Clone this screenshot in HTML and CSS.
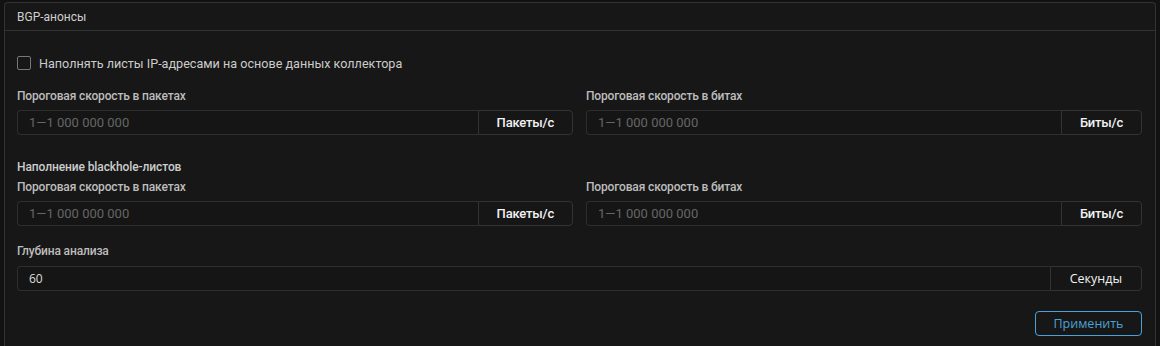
FILE: index.html
```html
<!DOCTYPE html>
<html>
<head>
  <title>BGP-анонсы</title>
  <link rel="stylesheet" href="styles.css">
</head>
<body>
  <div class="card">
    <div class="card-header">BGP-анонсы</div>

    <div class="card-body">
      <label class="check">
        <span class="box"></span>
        Наполнять листы IP-адресами на основе данных коллектора
      </label>

      <div class="row first">
        <div class="field">
          <div class="label">Пороговая скорость в пакетах</div>
          <div class="group">
            <input type="text" class="input" placeholder="1—1 000 000 000">
            <button class="addon">Пакеты/с</button>
          </div>
        </div>
        <div class="field">
          <div class="label">Пороговая скорость в битах</div>
          <div class="group">
            <input type="text" class="input" placeholder="1—1 000 000 000">
            <button class="addon">Биты/с</button>
          </div>
        </div>
      </div>

      <div class="section-title">Наполнение blackhole-листов</div>
      <div class="row">
        <div class="field">
          <div class="label">Пороговая скорость в пакетах</div>
          <div class="group">
            <input type="text" class="input" placeholder="1—1 000 000 000">
            <button class="addon">Пакеты/с</button>
          </div>
        </div>
        <div class="field">
          <div class="label">Пороговая скорость в битах</div>
          <div class="group">
            <input type="text" class="input" placeholder="1—1 000 000 000">
            <button class="addon">Биты/с</button>
          </div>
        </div>
      </div>

      <div class="field depth">
        <div class="label">Глубина анализа</div>
        <div class="group">
          <input type="text" class="input value" value="60">
          <button class="addon alt">Секунды</button>
        </div>
      </div>

      <div class="actions">
        <button class="apply">Применить</button>
      </div>
    </div>
  </div>
</body>
</html>
```

FILE: styles.css
```css
* {
  box-sizing: border-box;
}

body {
  margin: 0;
  background-color: #121212;
  font-family: Roboto, "Liberation Sans", sans-serif;
  color: #cccccc;
  overflow: hidden;
}

.card {
  margin: 2px 4px 0 4px;
  background-color: #171717;
  border: 1px solid #333333;
  border-bottom: none;
  border-radius: 4px 4px 0 0;
  height: 344px;
}

.card-header {
  height: 28px;
  line-height: 28px;
  padding-left: 12px;
  font-size: 12px;
  color: #cfcfcf;
  border-bottom: 1px solid #333333;
}

.card-body {
  padding: 25px 13px 0 12px;
}

.check {
  display: flex;
  align-items: center;
  gap: 8px;
  height: 14px;
  font-size: 12.6px;
  color: #cccccc;
}

.box {
  width: 14px;
  height: 14px;
  border: 1px solid #777777;
  border-radius: 2px;
}

.row {
  display: grid;
  grid-template-columns: 1fr 1fr;
  gap: 13px;
}

.row.first {
  margin-top: 18px;
}

.label {
  font-size: 12px;
  font-weight: 500;
  line-height: 16px;
  color: #bdbdbd;
  letter-spacing: -0.15px;
  margin-bottom: 6px;
}

.group {
  display: flex;
  height: 25px;
}

.input {
  flex: 1;
  min-width: 0;
  height: 100%;
  padding: 0 11px;
  font-family: Roboto, "Liberation Sans", sans-serif;
  font-size: 13px;
  color: #dddddd;
  background-color: #151515;
  border: 1px solid #2e2e2e;
  border-right: none;
  border-radius: 4px 0 0 4px;
  outline: none;
}

.input::placeholder {
  color: #666666;
}

.input.value {
  font-family: "Open Sans", Roboto, sans-serif;
  font-size: 12px;
}

.addon {
  height: 100%;
  padding: 0 18px;
  font-family: Roboto, "Liberation Sans", sans-serif;
  font-size: 13px;
  font-weight: 500;
  letter-spacing: -0.2px;
  color: #f2f2f2;
  background-color: #161616;
  border: 1px solid #333333;
  border-radius: 0 4px 4px 0;
}

.addon.alt {
  font-family: "Open Sans", Roboto, sans-serif;
  font-weight: 400;
  font-size: 12.5px;
  letter-spacing: 0;
  padding: 0 19px;
}

.section-title {
  margin-top: 24px;
  margin-bottom: 4px;
  font-size: 12px;
  font-weight: 500;
  line-height: 16px;
  color: #cccccc;
  letter-spacing: -0.1px;
}

.depth {
  margin-top: 17px;
}

.depth .label {
  margin-bottom: 7px;
}

.actions {
  display: flex;
  justify-content: flex-end;
  margin-top: 20px;
}

.apply {
  width: 107px;
  height: 25px;
  font-family: "Open Sans", Roboto, sans-serif;
  font-size: 12.5px;
  color: #4ba2d6;
  background-color: transparent;
  border: 1px solid #4aa3d8;
  border-radius: 4px;
}
```
